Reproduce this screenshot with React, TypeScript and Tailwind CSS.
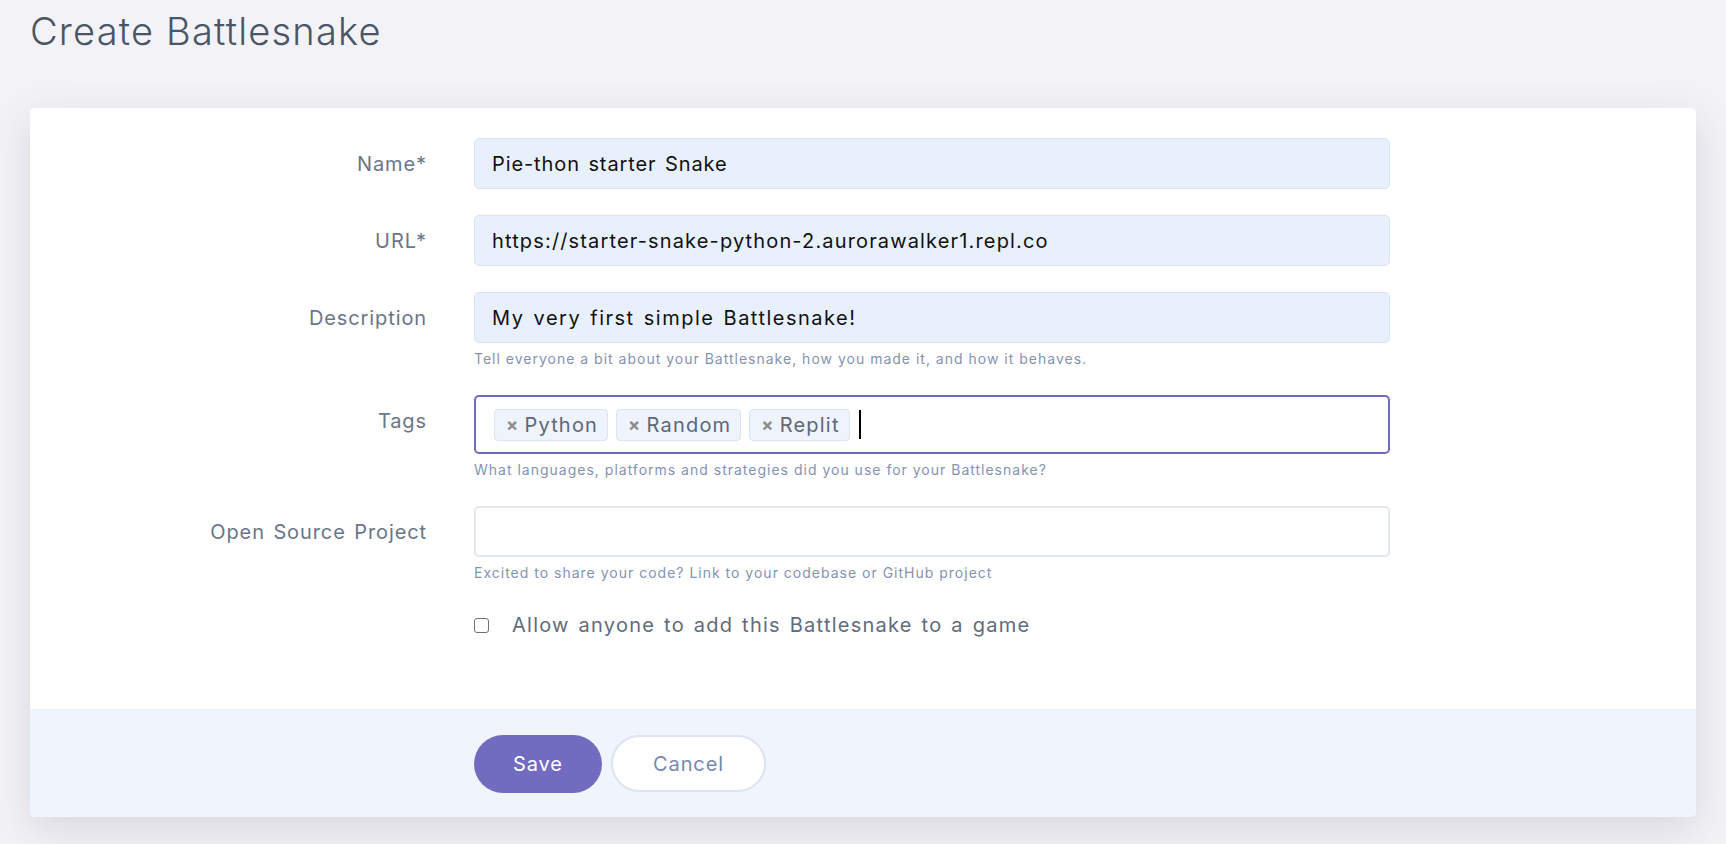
import { ReactNode } from "react";

const font = { fontFamily: "Inter, 'Noto Sans', sans-serif" };

type FieldRowProps = {
  label: string;
  help?: string;
  children: ReactNode;
};

function HelpText({ children }: { children: ReactNode }) {
  return <p className="mt-[6px] text-[14px] leading-[20px] tracking-[1px] text-[#8593b0]">{children}</p>;
}

function FieldRow({ label, help, children }: FieldRowProps) {
  return (
    <div className="grid grid-cols-[397px_916px] gap-x-[47px]">
      <div className="flex h-[51px] items-center justify-end text-[20px] tracking-[0.9px] text-[#6b7589] [word-spacing:2px]">
        {label}
      </div>
      <div>
        {children}
        {help && <HelpText>{help}</HelpText>}
      </div>
    </div>
  );
}

function FilledInput({ value, className = "tracking-[0.9px]" }: { value: string; className?: string }) {
  return (
    <div
      className={`flex h-[51px] items-center rounded-[5px] border border-[#dbe3f2] bg-[#e8f0fe] px-[17px] text-[20px] text-[#111111] [word-spacing:2px] ${className}`}
    >
      {value}
    </div>
  );
}

function Tag({ name }: { name: string }) {
  return (
    <span className="flex h-[32px] items-center gap-[5px] rounded-[4px] border border-[#dde4f1] bg-[#eef3fc] pl-[11px] pr-[9px] text-[20px] tracking-[1.2px] text-[#5d677a]">
      <span className="text-[18px] font-bold text-[#8c8c8c]">×</span>
      {name}
    </span>
  );
}

export default function App() {
  return (
    <div className="min-h-screen bg-[#f3f3f7] px-[30px] pb-[28px]" style={font}>
      <h1 className="pt-[7px] text-[38px] font-light leading-[48px] tracking-[1.2px] text-[#4a5568]">Create Battlesnake</h1>

      <div className="mt-[53px] overflow-hidden rounded-[5px] bg-white shadow-[0_12px_40px_rgba(60,60,90,0.16)]">
        <div className="flex flex-col gap-[26px] pt-[30px] pb-[68px]">
          <FieldRow label="Name*">
            <FilledInput value="Pie-thon starter Snake" />
          </FieldRow>
          <FieldRow label="URL*">
            <FilledInput value="https://starter-snake-python-2.aurorawalker1.repl.co" className="tracking-[1.15px]" />
          </FieldRow>
          <FieldRow
            label="Description"
            help="Tell everyone a bit about your Battlesnake, how you made it, and how it behaves."
          >
            <FilledInput value="My very first simple Battlesnake!" className="tracking-[1.5px]" />
          </FieldRow>
          <div className="grid grid-cols-[397px_916px] gap-x-[47px]">
            <div className="flex h-[51px] items-center justify-end text-[20px] tracking-[0.9px] text-[#6b7589]">Tags</div>
            <div>
              <div className="flex h-[59px] items-center gap-[8px] rounded-[5px] border-2 border-[#6f6ac1] bg-white px-[18px]">
                <Tag name="Python" />
                <Tag name="Random" />
                <Tag name="Replit" />
                <span className="ml-[1px] h-[29px] w-[2px] bg-black" />
              </div>
              <HelpText>What languages, platforms and strategies did you use for your Battlesnake?</HelpText>
            </div>
          </div>
          <FieldRow label="Open Source Project" help="Excited to share your code? Link to your codebase or GitHub project">
            <div className="h-[51px] rounded-[5px] border-2 border-[#e1e7f2] bg-white" />
          </FieldRow>
          <div className="grid grid-cols-[397px_916px] gap-x-[47px]">
            <div />
            <label className="flex h-[32px] items-center gap-[23px] text-[20px] tracking-[1.25px] text-[#616b7d] [word-spacing:2px]">
              <span className="h-[15px] w-[15px] rounded-[3px] border-[1.5px] border-[#707070] bg-white" />
              Allow anyone to add this Battlesnake to a game
            </label>
          </div>
        </div>

        <div className="grid grid-cols-[397px_916px] gap-x-[47px] border-t border-[#e8eefa] bg-[#eff4fd] pt-[25px] pb-[24px]">
          <div />
          <div className="flex gap-[9px]">
            <button className="h-[58px] w-[128px] rounded-full bg-[#716cc0] text-[20px] tracking-[0.9px] text-white">Save</button>
            <button className="h-[57px] w-[155px] rounded-full border-2 border-[#dde4f0] bg-white text-[20px] tracking-[0.9px] text-[#7888ad]">
              Cancel
            </button>
          </div>
        </div>
      </div>
    </div>
  );
}
